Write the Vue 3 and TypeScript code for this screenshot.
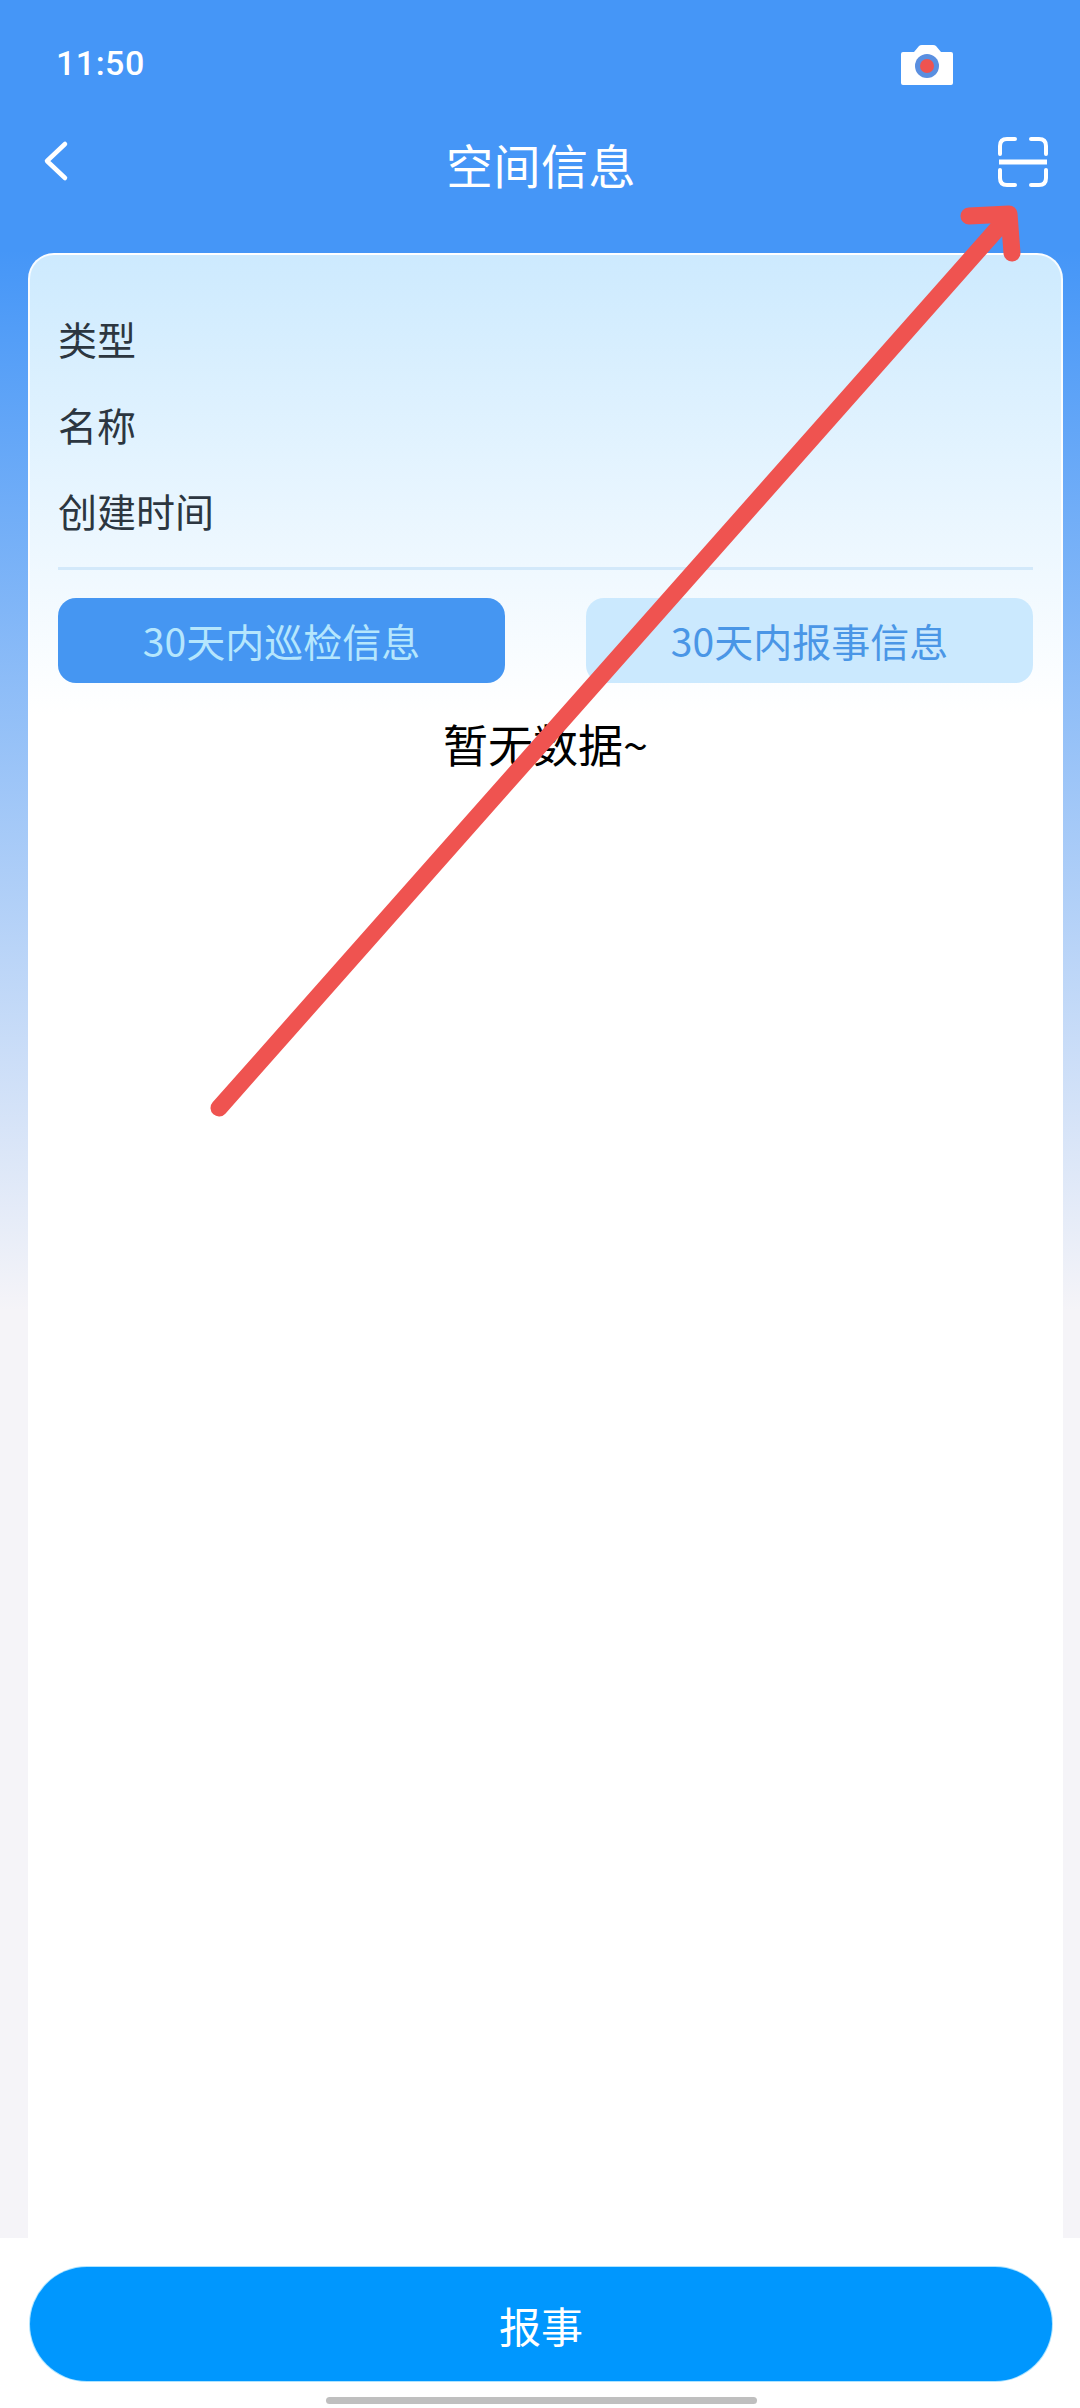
<script setup lang="ts">
const rows: string[] = ['类型', '名称', '创建时间']
</script>

<template>
  <div class="page">
    <header class="status">
      <span class="time">11:50</span>
      <svg class="camera" width="54" height="42" viewBox="0 0 54 42">
        <path d="M3 8h11l5-6q1-1 3-1h11q2 0 3 1l5 6h10q2 0 2 2v29q0 2-2 2H3q-2 0-2-2V10q0-2 2-2z" fill="#fff" />
        <circle cx="27" cy="22" r="12" fill="#5a8fe0" />
        <circle cx="27" cy="22" r="7" fill="#ef5350" />
      </svg>
    </header>
    <nav class="nav">
      <svg class="back" width="28" height="44" viewBox="0 0 28 44">
        <path d="M23 4 5 21l18 17" fill="none" stroke="#fff" stroke-width="4.5" stroke-linecap="round" stroke-linejoin="round" />
      </svg>
      <h1 class="title">空间信息</h1>
      <svg class="scan" width="50" height="50" viewBox="0 0 50 50">
        <path d="M17 2H9Q2 2 2 9v8M33 2h8q7 0 7 7v8M17 48H9q-7 0-7-7v-8M33 48h8q7 0 7-7v-8" fill="none" stroke="#fff" stroke-width="4" stroke-linecap="round" />
        <path d="M1 25h48" stroke="#fff" stroke-width="5" />
      </svg>
    </nav>
    <main class="card">
      <ul class="info">
        <li v-for="row in rows" :key="row" class="row">{{ row }}</li>
      </ul>
      <div class="divider"></div>
      <div class="tabs">
        <div class="tab active">30天内巡检信息</div>
        <div class="tab">30天内报事信息</div>
      </div>
      <p class="empty">暂无数据~</p>
    </main>
    <footer class="footer">
      <button class="report">报事</button>
      <div class="home"></div>
    </footer>
    <svg class="arrow" width="1080" height="2408" viewBox="0 0 1080 2408">
      <path d="M219 1108 1006 219M969 216l40-2 3 39" fill="none" stroke="#ef5350" stroke-width="17" stroke-linecap="round" stroke-linejoin="round" />
    </svg>
  </div>
</template>

<style scoped>
.page {
  position: relative;
  width: 1080px;
  height: 2408px;
  display: flex;
  flex-direction: column;
  overflow: hidden;
  background: linear-gradient(180deg, #4596f7 0, #4596f7 250px, #f5f4f8 1310px);
  font-family: "Noto Sans CJK SC", "Noto Sans", sans-serif;
}
.status {
  height: 126px;
  flex: none;
  display: flex;
  align-items: flex-start;
  justify-content: space-between;
  padding: 43px 126px 0 56px;
  box-sizing: border-box;
}
.time {
  font-family: Roboto, sans-serif;
  font-weight: 500;
  font-size: 34px;
  line-height: 40px;
  color: #fff;
  letter-spacing: 0.5px;
}
.camera { margin-top: 1px; }
.nav {
  height: 127px;
  flex: none;
  display: flex;
  align-items: flex-start;
  justify-content: space-between;
  padding: 8px 32px 0 42px;
  box-sizing: border-box;
}
.title {
  margin: 0 0 0 14px;
  font-size: 47px;
  line-height: 60px;
  font-weight: 400;
  color: #fff;
  letter-spacing: 0.5px;
}
.back { margin-top: 6px; }
.scan { margin-top: 3px; }
.card {
  flex: 1;
  margin: 0 17px 0 28px;
  padding: 40px 28px 0 28px;
  box-sizing: border-box;
  border: 2px solid rgba(255, 255, 255, 0.85);
  border-bottom: 0;
  border-radius: 26px 26px 0 0;
  background: linear-gradient(180deg, #cdeafe 0, #fff 460px);
  min-height: 0;
}
.info {
  margin: 0;
  padding: 0;
  list-style: none;
}
.row {
  height: 86px;
  line-height: 86px;
  font-size: 39px;
  color: #2c3640;
}
.divider {
  height: 3px;
  margin-top: 14px;
  background: #d3e9fa;
}
.tabs {
  margin-top: 28px;
  display: flex;
  justify-content: space-between;
}
.tab {
  width: 447px;
  height: 85px;
  line-height: 85px;
  border-radius: 18px;
  text-align: center;
  font-size: 39px;
  background: #cbe9fe;
  color: #4a96e6;
}
.tab.active {
  background: #4596f2;
  color: #b5e6fd;
}
.empty {
  margin: 29px 0 0;
  text-align: center;
  font-size: 45px;
  line-height: 64px;
  color: #000;
}
.footer {
  height: 170px;
  flex: none;
  position: relative;
  background: #fff;
  padding: 29px 28px 0 30px;
  box-sizing: border-box;
}
.report {
  display: block;
  width: 100%;
  height: 114px;
  border: 0;
  border-radius: 57px;
  background: #0097fe;
  box-shadow: 0 0 0 1px #aee4ff;
  color: #fff;
  font-family: inherit;
  font-size: 42px;
  padding: 0;
}
.home {
  width: 431px;
  height: 7px;
  margin: 16px auto 0;
  border-radius: 4px;
  background: #bfbfbf;
}
.arrow {
  position: absolute;
  left: 0;
  top: 0;
  pointer-events: none;
}
</style>
